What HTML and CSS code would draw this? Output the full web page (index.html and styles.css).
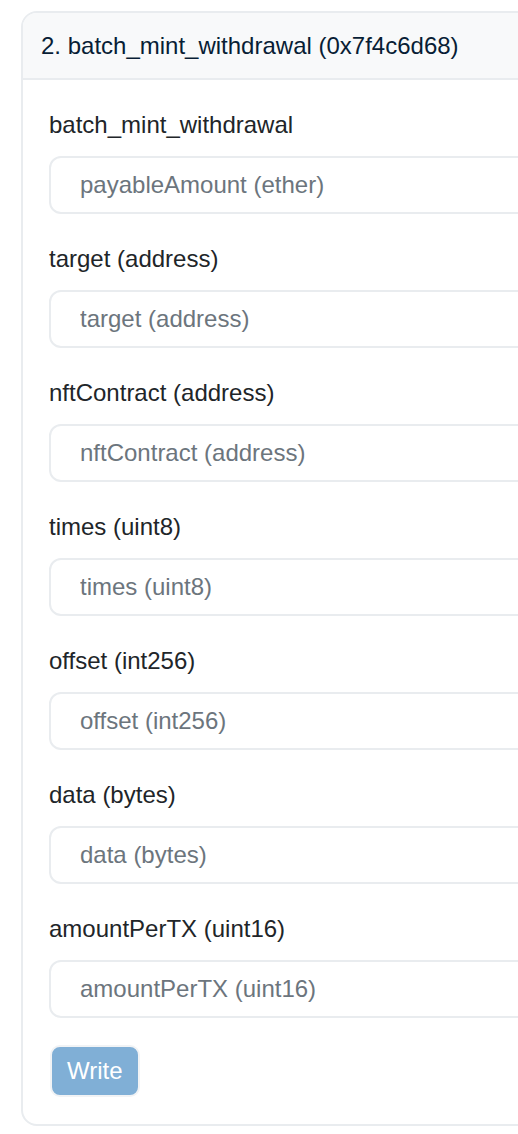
FILE: index.html
```html
<!DOCTYPE html>
<html>
<head>
<meta charset="utf-8">
<link rel="stylesheet" href="styles.css">
</head>
<body>
<div class="card">
  <div class="card-header">2. batch_mint_withdrawal (0x7f4c6d68)</div>
  <div class="card-body">
    <div class="field">
      <label class="label">batch_mint_withdrawal</label>
      <input class="input" type="text" placeholder="payableAmount (ether)">
    </div>
    <div class="field">
      <label class="label">target (address)</label>
      <input class="input" type="text" placeholder="target (address)">
    </div>
    <div class="field">
      <label class="label">nftContract (address)</label>
      <input class="input" type="text" placeholder="nftContract (address)">
    </div>
    <div class="field">
      <label class="label">times (uint8)</label>
      <input class="input" type="text" placeholder="times (uint8)">
    </div>
    <div class="field">
      <label class="label">offset (int256)</label>
      <input class="input" type="text" placeholder="offset (int256)">
    </div>
    <div class="field">
      <label class="label">data (bytes)</label>
      <input class="input" type="text" placeholder="data (bytes)">
    </div>
    <div class="field">
      <label class="label">amountPerTX (uint16)</label>
      <input class="input" type="text" placeholder="amountPerTX (uint16)">
    </div>
    <button class="btn" type="button">Write</button>
  </div>
</div>
</body>
</html>
```
FILE: styles.css
```css
html, body {
  margin: 0;
  padding: 0;
  background: #ffffff;
  overflow: hidden;
}
body {
  font-family: "Liberation Sans", Arial, sans-serif;
  padding: 11px 0 0 21px;
}
.card {
  width: 540px;
  border: 2px solid #e9ecef;
  border-radius: 16px;
  box-sizing: border-box;
  overflow: hidden;
  background: #fff;
}
.card-header {
  height: 67px;
  box-sizing: border-box;
  background: #f8f9fa;
  border-bottom: 2px solid #e9ecef;
  padding: 0 0 0 18px;
  display: flex;
  align-items: center;
  font-size: 24px;
  color: #081d35;
}
.card-body {
  padding: 30px 0 27px 26px;
  display: flex;
  flex-direction: column;
  align-items: flex-start;
}
.field {
  display: flex;
  flex-direction: column;
  width: 100%;
  margin-bottom: 30px;
}
.field:last-of-type {
  margin-bottom: 27px;
}
.label {
  font-size: 24px;
  line-height: 30px;
  color: #212529;
  margin-bottom: 16px;
}
.input {
  height: 58px;
  box-sizing: border-box;
  width: 100%;
  border: 2px solid #e9ecef;
  border-radius: 12px;
  padding: 0 0 0 29px;
  font-family: "Liberation Sans", Arial, sans-serif;
  font-size: 24px;
  color: #212529;
  background: #fff;
  outline: none;
}
.input::placeholder {
  color: #6c757d;
  opacity: 1;
}
.btn {
  height: 52px;
  padding: 0 15px;
  border: 2px solid #f1f3f5;
  border-radius: 10px;
  background: #80afd6;
  color: #ffffff;
  font-family: "Liberation Sans", Arial, sans-serif;
  font-size: 24px;
  margin-left: 1px;
}
```
